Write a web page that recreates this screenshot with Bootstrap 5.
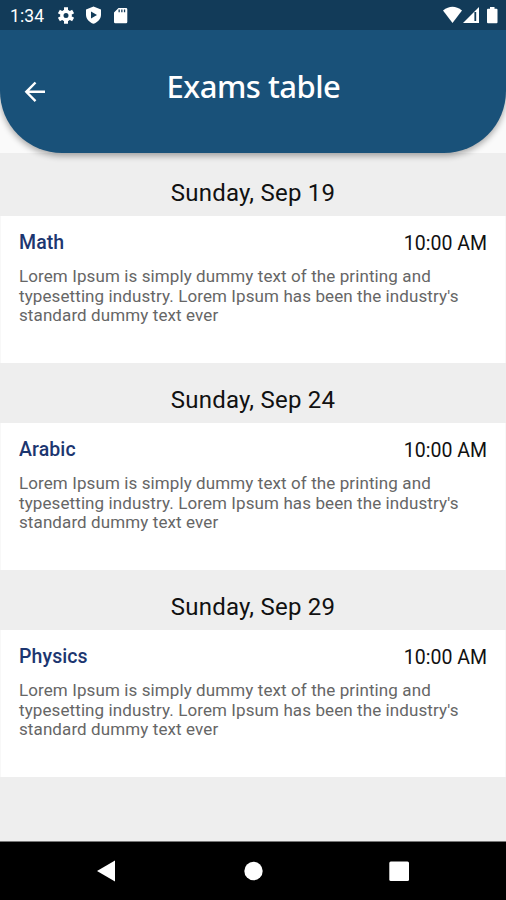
<!DOCTYPE html>
<html lang="en">
<head>
<meta charset="utf-8">
<meta name="viewport" content="width=device-width, initial-scale=1">
<title>Exams table</title>
<link href="https://cdn.jsdelivr.net/npm/bootstrap@5.3.0/dist/css/bootstrap.min.css" rel="stylesheet">
<style>
  body { font-family: Roboto, sans-serif; background: #fafafa; color: #111; }
  .screen { height: 900px; }
  .app-header { height: 153px; background: #195179; border-radius: 0 0 62px 62px; box-shadow: 0 3px 6px rgba(0,0,0,.33); z-index: 1; }
  .status-bar { height: 30px; background: #123b59; padding: 0 7px 0 10px; }
  .clock { font-size: 17.5px; line-height: 30px; width: 47px; padding-top: 2px; letter-spacing: .15px; }
  .title-row { height: 123px; padding: 0 24px; }
  .back { margin-top: 51px; }
  .page-title { font: 500 31px/40px "Noto Sans", sans-serif; letter-spacing: -.5px; margin-top: 36px; padding-right: 5px; }
  .exam-list { background: #eee; }
  .exam-date { height: 63px; padding-top: 24px; font-size: 24px; line-height: 32px; letter-spacing: .23px; }
  .exam-group + .exam-group .exam-date { height: 60px; padding-top: 21px; }
  .exam-card { height: 147px; padding: 17px 18px 0; border: solid #f8f8f8; border-width: 0 1px; }
  .subject { color: #1c3670; font-size: 19.5px; font-weight: 500; line-height: 20px; letter-spacing: .1px; }
  .exam-time { font-size: 19.5px; line-height: 21px; }
  .details { font-size: 17px; letter-spacing: .1px; line-height: 19.7px; margin-top: 13px; color: #666; }
  .nav-keys { height: 59px; background: #000; border-top: 1px solid #777; }
</style>
</head>
<body>
<div class="screen d-flex flex-column overflow-hidden">
  <header class="app-header position-relative overflow-visible flex-shrink-0 text-white">
    <div class="status-bar d-flex align-items-center">
      <span class="clock">1:34</span>
      <svg width="76" height="30" viewBox="57 0 76 30" fill="#fff">
        <g fill="none" stroke="#fff"><circle cx="66" cy="15.5" r="4.2" stroke-width="3.4"/><path d="M66 7.3v3M66 20.7v3M58.9 11.4l2.6 1.5M70.5 18.1l2.6 1.5M58.9 19.6l2.6-1.5M70.5 12.9l2.6-1.5" stroke-width="4"/></g>
        <path fill-rule="evenodd" d="M93.500 6.500l7.500 3v5.200c0 4.200-3.100 7.400-7.500 9.100-4.400-1.700-7.500-4.900-7.500-9.100V9.500zM91 11.500v7l6-3.500z"/>
        <path fill-rule="evenodd" d="M118.500 8h7.500q1.300 0 1.300 1.300v12.700q0 1.300-1.300 1.300h-10.700q-1.300 0-1.300-1.300v-9.500zM118.500 9.600v2.700h1.300v-2.700zM121.200 9.600v2.700h1.300v-2.700zM123.900 9.600v2.700h1.300v-2.700z"/>
      </svg>
      <svg class="ms-auto" width="57" height="30" viewBox="442 0 57 30" fill="#fff">
        <path d="M443 10.500q9.500-7.500 19 0L452.500 23z"/>
        <path d="M463 23L479 7v16z"/><path d="M475.300 12v9" stroke="#123b59" stroke-width="1.800"/>
        <path d="M490 7h4.500v1.700h2q1 0 1 1v12.600q0 1-1 1h-8.500q-1 0-1-1V9.700q0-1 1-1h2z"/>
      </svg>
    </div>
    <div class="title-row d-flex align-items-start">
      <svg class="back" width="22" height="22" viewBox="0 0 22 22" fill="none" stroke="#fff" stroke-width="2.400"><path d="M21 10.800H2.500M11.500 1.500L2.300 10.800l9.200 9.300"/></svg>
      <h1 class="page-title flex-grow-1 text-center">Exams table</h1>
      <span class="px-2"></span>
    </div>
  </header>
  <main class="exam-list flex-grow-1">
    <section class="exam-group">
      <div class="exam-date text-center">Sunday, Sep 19</div>
      <article class="exam-card bg-white">
        <div class="d-flex justify-content-between"><span class="subject">Math</span><span class="exam-time">10:00 AM</span></div>
        <p class="details mb-0">Lorem Ipsum is simply dummy text of the printing and<br>typesetting industry. Lorem Ipsum has been the industry's<br>standard dummy text ever</p>
      </article>
    </section>
    <section class="exam-group">
      <div class="exam-date text-center">Sunday, Sep 24</div>
      <article class="exam-card bg-white">
        <div class="d-flex justify-content-between"><span class="subject">Arabic</span><span class="exam-time">10:00 AM</span></div>
        <p class="details mb-0">Lorem Ipsum is simply dummy text of the printing and<br>typesetting industry. Lorem Ipsum has been the industry's<br>standard dummy text ever</p>
      </article>
    </section>
    <section class="exam-group">
      <div class="exam-date text-center">Sunday, Sep 29</div>
      <article class="exam-card bg-white">
        <div class="d-flex justify-content-between"><span class="subject">Physics</span><span class="exam-time">10:00 AM</span></div>
        <p class="details mb-0">Lorem Ipsum is simply dummy text of the printing and<br>typesetting industry. Lorem Ipsum has been the industry's<br>standard dummy text ever</p>
      </article>
    </section>
  </main>
  <nav class="nav-keys flex-shrink-0">
    <svg class="d-block" width="506" height="58" viewBox="0 842 506 58" fill="#fff">
      <path d="M97 871l18-10.500v21z"/><circle cx="253.500" cy="871" r="9.200"/><rect x="389.300" y="861.500" width="19.700" height="19.500" rx="1.500"/>
    </svg>
  </nav>
</div>
<script src="https://cdn.jsdelivr.net/npm/bootstrap@5.3.0/dist/js/bootstrap.bundle.min.js"></script>
</body>
</html>
